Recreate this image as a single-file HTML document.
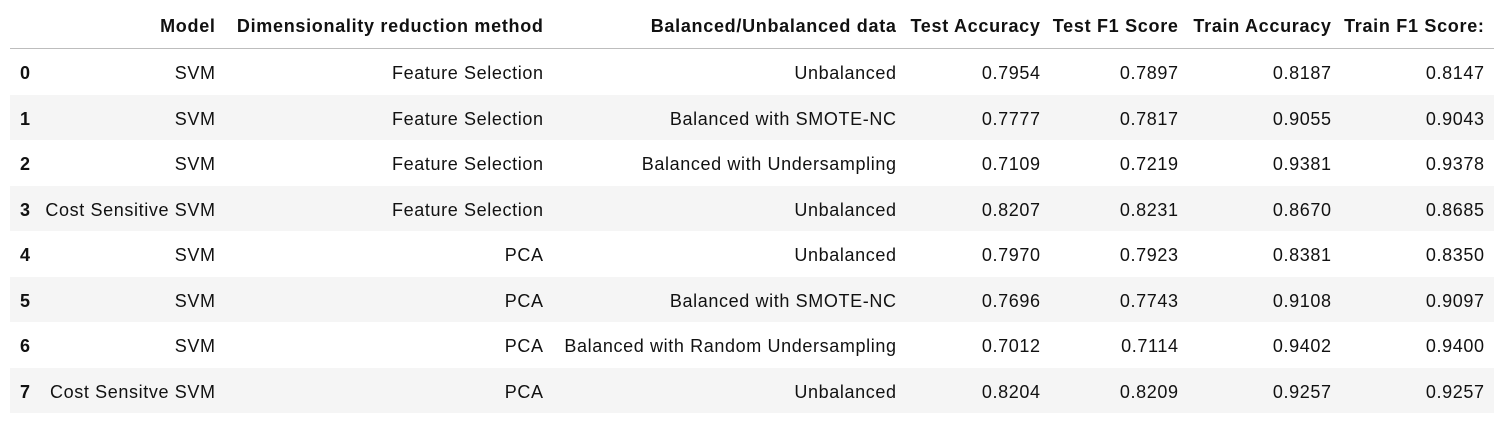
<!DOCTYPE html>
<html><head><meta charset="utf-8"><style>
body{margin:0;width:1509px;height:432px;background:#fff;font-family:"Liberation Sans",sans-serif;font-size:18px;color:#111;position:relative;overflow:hidden}
.r{position:absolute;left:10px;width:1484px;height:45.5px}
.s{background:#f5f5f5}
.c{position:absolute;white-space:nowrap;line-height:20px;letter-spacing:0.62px}
.h{font-weight:bold;letter-spacing:0.7px}
.line{position:absolute;left:10px;width:1484px;top:48px;height:1px;background:#bdbdbd}
</style></head><body>
<div class="line"></div>
<div id="t"></div>
<script>
var rights=[215,543,896,1040,1178,1331,1484];
var hdr=["Model","Dimensionality reduction method","Balanced/Unbalanced data","Test Accuracy","Test F1 Score","Train Accuracy","Train F1 Score:"];
var rows=[
["SVM","Feature Selection","Unbalanced","0.7954","0.7897","0.8187","0.8147"],
["SVM","Feature Selection","Balanced with SMOTE-NC","0.7777","0.7817","0.9055","0.9043"],
["SVM","Feature Selection","Balanced with Undersampling","0.7109","0.7219","0.9381","0.9378"],
["Cost Sensitive SVM","Feature Selection","Unbalanced","0.8207","0.8231","0.8670","0.8685"],
["SVM","PCA","Unbalanced","0.7970","0.7923","0.8381","0.8350"],
["SVM","PCA","Balanced with SMOTE-NC","0.7696","0.7743","0.9108","0.9097"],
["SVM","PCA","Balanced with Random Undersampling","0.7012","0.7114","0.9402","0.9400"],
["Cost Sensitve SVM","PCA","Unbalanced","0.8204","0.8209","0.9257","0.9257"]];
var h="";
function cell(txt,right,y,b){return '<div class="c'+(b?' h':'')+'" style="right:'+(1509-right-0.6)+'px;top:'+y+'px">'+txt+'</div>';}
hdr.forEach(function(t,i){h+=cell(t,rights[i],16,true);});
rows.forEach(function(r,k){
 var top=49+k*45.5;
 if(k%2==1)h+='<div class="r s" style="top:'+top+'px"></div>';
 var y=top+14;
 h+='<div class="c h" style="left:20px;top:'+y+'px">'+k+'</div>';
 r.forEach(function(t,i){h+=cell(t,rights[i],y,false);});
});
document.getElementById('t').innerHTML=h;
</script>
</body></html>
